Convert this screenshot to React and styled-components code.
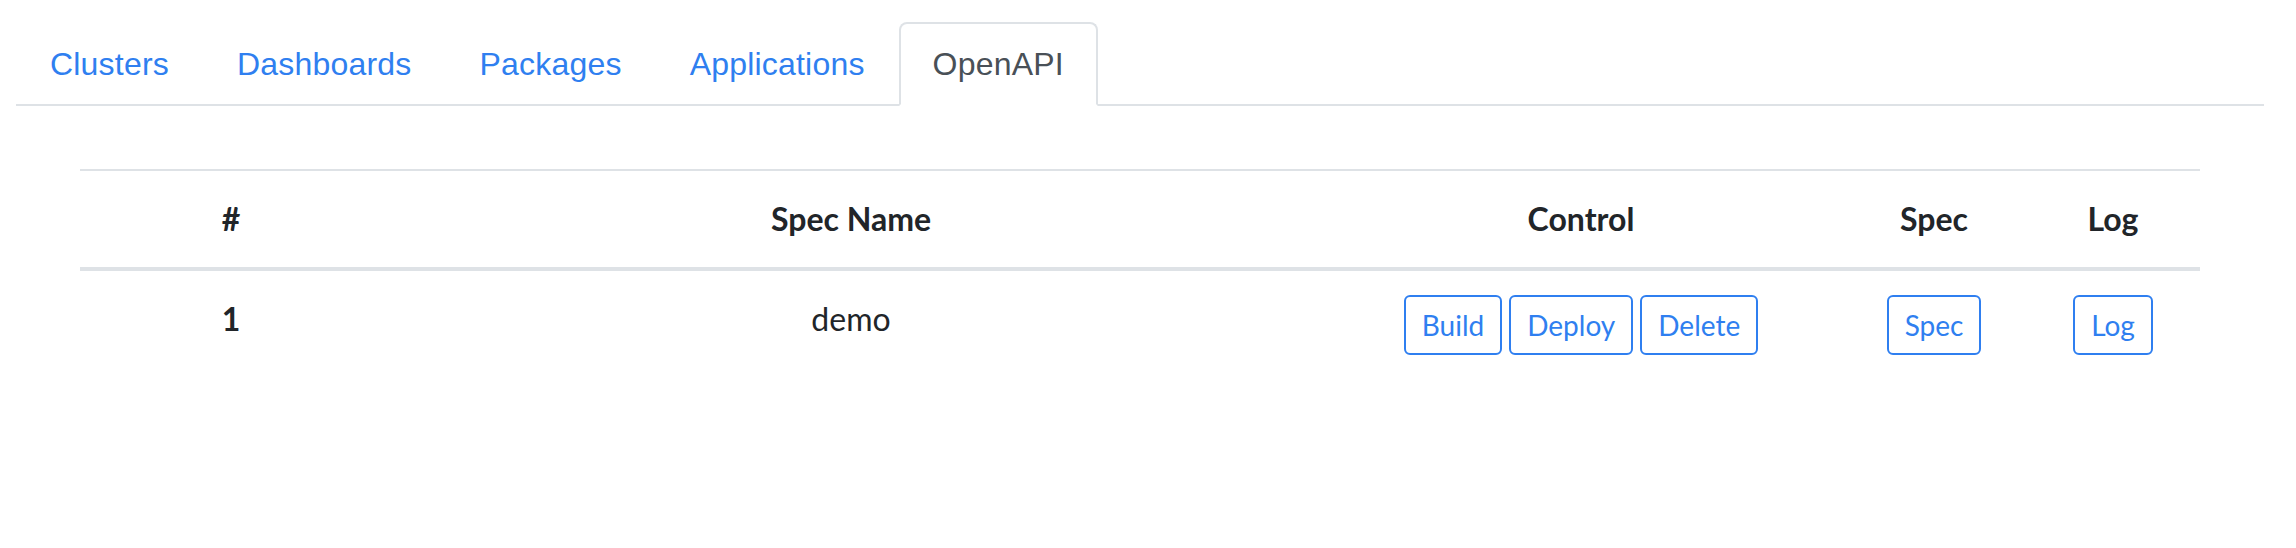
import React from "react";
import styled, { createGlobalStyle } from "styled-components";

const Global = createGlobalStyle`
  html, body { margin: 0; padding: 0; background: #fff; }
  body { font-family: "Lato", "Liberation Sans", sans-serif; color: #212529; }
  * { box-sizing: border-box; }
`;

const BLUE = "#2f7ff0";

const Page = styled.div`
  padding: 22px 32px 0 16px;
`;

const Nav = styled.nav`
  display: flex;
  border-bottom: 2px solid #dee2e6;
`;

const Tab = styled.a`
  display: block;
  padding: 16px 32px;
  margin-bottom: -2px;
  border: 2px solid transparent;
  border-top-left-radius: 8px;
  border-top-right-radius: 8px;
  font-family: "Liberation Sans", Arial, sans-serif;
  font-size: 32px;
  line-height: 48px;
  letter-spacing: 0.2px;
  color: ${(p) => (p.$active ? "#495057" : BLUE)};
  background: ${(p) => (p.$active ? "#fff" : "transparent")};
  border-color: ${(p) => (p.$active ? "#dee2e6 #dee2e6 #fff" : "transparent")};
  text-decoration: none;
  cursor: pointer;
`;

const Content = styled.div`
  padding: 63px 64px 0;
`;

const Table = styled.table`
  width: 100%;
  border-collapse: collapse;
  table-layout: fixed;
  font-family: "Lato", sans-serif;
  font-size: 32px;
  line-height: 48px;
  color: #212529;
`;

const HeadCell = styled.th`
  padding: 24px;
  text-align: center;
  vertical-align: top;
  font-weight: 700;
  border-top: 2px solid #dee2e6;
  border-bottom: 4px solid #dee2e6;
`;

const RowHead = styled.th`
  padding: 24px;
  text-align: center;
  vertical-align: top;
  font-weight: 700;
`;

const Cell = styled.td`
  padding: 24px;
  text-align: center;
  vertical-align: top;
`;

const ButtonGroup = styled.div`
  display: flex;
  justify-content: center;
  gap: 7px;
`;

const OutlineButton = styled.button`
  display: inline-block;
  padding: 7px 16px;
  font-family: "Lato", sans-serif;
  font-size: 28px;
  line-height: 42px;
  color: ${BLUE};
  background: transparent;
  border: 2px solid ${BLUE};
  border-radius: 6px;
  cursor: pointer;
`;

const tabs = ["Clusters", "Dashboards", "Packages", "Applications", "OpenAPI"];
const cols = [
  { label: "#", width: 302 },
  { label: "Spec Name", width: 938 },
  { label: "Control", width: 522 },
  { label: "Spec", width: 184 },
  { label: "Log", width: 174 },
];

export default function App() {
  return (
    <Page>
      <Global />
      <Nav>
        {tabs.map((t) => (
          <Tab key={t} $active={t === "OpenAPI"}>
            {t}
          </Tab>
        ))}
      </Nav>
      <Content>
        <Table>
          <colgroup>
            {cols.map((c) => (
              <col key={c.label} style={{ width: c.width }} />
            ))}
          </colgroup>
          <thead>
            <tr>
              {cols.map((c) => (
                <HeadCell key={c.label}>{c.label}</HeadCell>
              ))}
            </tr>
          </thead>
          <tbody>
            <tr>
              <RowHead>1</RowHead>
              <Cell>demo</Cell>
              <Cell>
                <ButtonGroup>
                  <OutlineButton>Build</OutlineButton>
                  <OutlineButton>Deploy</OutlineButton>
                  <OutlineButton>Delete</OutlineButton>
                </ButtonGroup>
              </Cell>
              <Cell>
                <ButtonGroup>
                  <OutlineButton>Spec</OutlineButton>
                </ButtonGroup>
              </Cell>
              <Cell>
                <ButtonGroup>
                  <OutlineButton>Log</OutlineButton>
                </ButtonGroup>
              </Cell>
            </tr>
          </tbody>
        </Table>
      </Content>
    </Page>
  );
}
